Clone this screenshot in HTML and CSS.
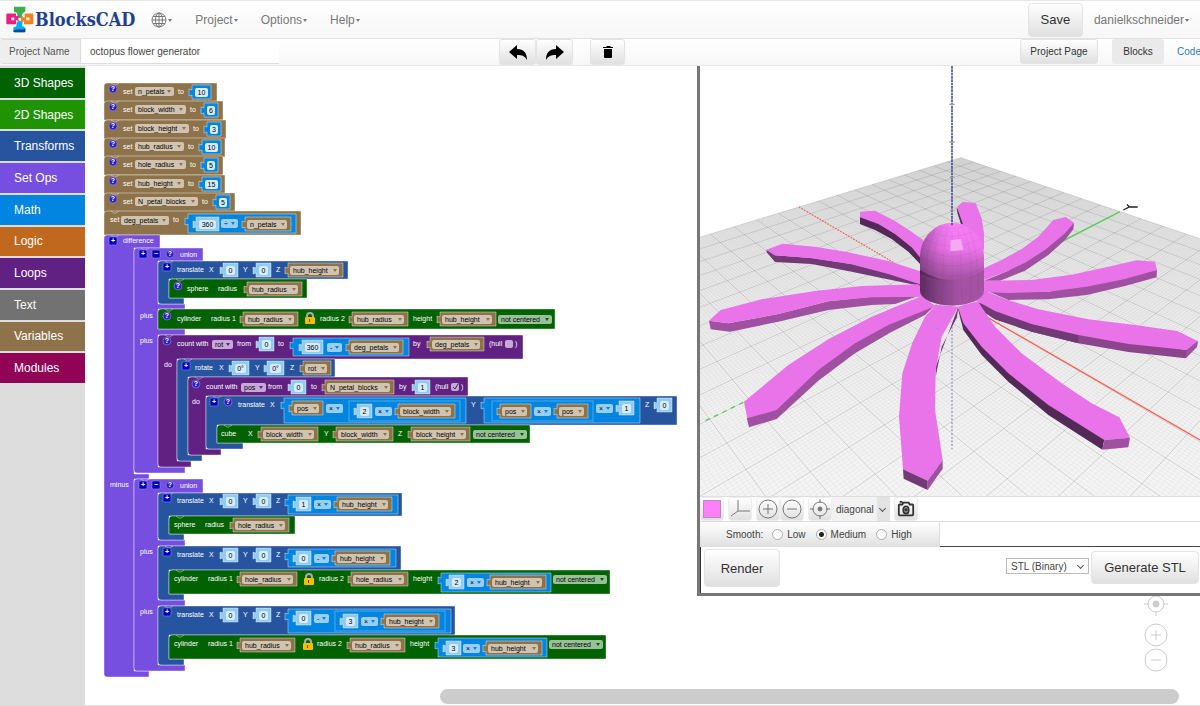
FILE: index.html
```html
<!DOCTYPE html>
<html lang="en">
<head>
<meta charset="utf-8">
<title>BlocksCAD</title>
<link rel="stylesheet" href="styles.css">
</head>
<body>
<header class="topbar">
  <a class="brand" href="#">
    <svg class="brand-mark" viewBox="0 0 84 80" aria-hidden="true">
      <path fill="#3fae49" d="M24 2h34v14l-8 5-3 8 5 5-11 5-9-6 4-4-4-9-8-3z"/>
      <path fill="#ee1c7a" d="M4 22h26v9l6-4 6 8-4 10-8-4v13H4q-3 0-3-3V25q0-3 3-3z"/>
      <path fill="#f58220" d="M56 22h23q3 0 3 3v26q0 3-3 3H54v-9l-8 3-3-10 5-7 8 4z"/>
      <path fill="#00aeef" d="M32 48l9-5 9 5-2 11 10 6v10q0 3-3 3H24q-2 0-2-3V64l9-4z"/>
      <path fill="#1f3f93" d="M22 74l8-4h20l8-2v7q0 3-3 3H25q-3 0-3-4z"/>
      <path fill="#fff" d="M16 34h9v8h-9zM61 34h9v8h-9zM37 35h8v7h-8z"/>
    </svg>
    <span>BlocksCAD</span>
  </a>
  <nav class="menu">
    <button class="menu-item" aria-label="Language">
      <svg class="globe" viewBox="0 0 16 16" aria-hidden="true"><circle cx="8" cy="8" r="7"/><ellipse cx="8" cy="8" rx="3.500" ry="7"/><path d="M8 1v14M1 8h14M2 4.500h12M2 11.500h12"/></svg><i class="caret"></i>
    </button>
    <button class="menu-item">Project<i class="caret"></i></button>
    <button class="menu-item">Options<i class="caret"></i></button>
    <button class="menu-item">Help<i class="caret"></i></button>
  </nav>
  <button class="btn btn-save">Save</button>
  <button class="menu-item account">danielkschneider<i class="caret"></i></button>
</header>

<div class="toolbar">
  <label class="name-label" for="project-name">Project Name</label>
  <input class="name-input" id="project-name" type="text" value="octopus flower generator">
  <div class="history">
    <button class="btn tool" aria-label="Undo"><svg viewBox="0 0 20 18"><path d="M1 9 9 2v4c7 0 10 4 10 11-2-4-5-5-10-5v4z"/></svg></button>
    <button class="btn tool" aria-label="Redo"><svg viewBox="0 0 20 18"><path d="M19 9 11 2v4C4 6 1 10 1 17c2-4 5-5 10-5v4z"/></svg></button>
  </div>
  <button class="btn tool trash" aria-label="Delete"><svg viewBox="0 0 20 18"><path d="M5 4h3l1-1h3l1 1h2v1H5zM6 6h8v8q0 1-1 1H7q-1 0-1-1z"/></svg></button>
  <div class="views">
    <button class="btn page">Project Page</button>
    <button class="tab active">Blocks</button>
    <a class="tab code" href="#">Code</a>
  </div>
</div>

<main class="main">
  <div class="sidebar">
    <nav class="toolbox">
      <button class="cat c-3d">3D Shapes</button>
      <button class="cat c-2d">2D Shapes</button>
      <button class="cat c-transform">Transforms</button>
      <button class="cat c-set">Set Ops</button>
      <button class="cat c-math">Math</button>
      <button class="cat c-logic">Logic</button>
      <button class="cat c-loop">Loops</button>
      <button class="cat c-text">Text</button>
      <button class="cat c-var">Variables</button>
      <button class="cat c-module">Modules</button>
    </nav>
  </div>

  <section class="workspace">
    <svg class="blocks" aria-label="Block program"><g id="blocks" transform="translate(-85 -66)"></g></svg>

    <div class="zoom-controls">
      <button aria-label="Center"><svg viewBox="0 0 24 24"><circle cx="12" cy="12" r="8"/><circle class="dot" cx="12" cy="12" r="3"/><path d="M0 12h4M20 12h4M12 0v4M12 20v4"/></svg></button>
      <button aria-label="Zoom in"><svg viewBox="0 0 24 24"><circle cx="12" cy="12" r="11"/><path d="M7 12h10M12 7v10"/></svg></button>
      <button aria-label="Zoom out"><svg viewBox="0 0 24 24"><circle cx="12" cy="12" r="11"/><path d="M7 12h10"/></svg></button>
    </div>
    <div class="scroll"></div>

    <aside class="viewer">
      <svg class="scene" viewBox="15 18 1500 1293" preserveAspectRatio="xMinYMin slice" aria-label="Rendered model">
        <defs>
          <linearGradient id="floor" x1="0" y1="0" x2="0" y2="1"><stop offset="0" stop-color="#e6e6e6"/><stop offset=".35" stop-color="#f4f4f4"/><stop offset="1" stop-color="#fff"/></linearGradient>
          <linearGradient id="dome" x1="0" y1="0" x2="0" y2="1"><stop offset="0" stop-color="#f97ff8"/><stop offset=".45" stop-color="#ee74ec"/><stop offset=".75" stop-color="#c160c0"/><stop offset="1" stop-color="#a452a3"/></linearGradient>
          <linearGradient id="shade" x1="0" y1="0" x2="1" y2="0"><stop offset="0" stop-color="#3a1a3e" stop-opacity=".45"/><stop offset=".3" stop-color="#3a1a3e" stop-opacity=".1"/><stop offset=".5" stop-color="#3a1a3e" stop-opacity="0"/></linearGradient>
          <linearGradient id="tube" x1="0" y1="0" x2="1" y2="0"><stop offset="0" stop-color="#5b2c5f"/><stop offset=".3" stop-color="#854286"/><stop offset=".6" stop-color="#a452a3"/><stop offset="1" stop-color="#a452a3"/></linearGradient>
        </defs>
        <g id="grid"></g>
        <path class="ax-x dotted" d="M312 441 600 610"/>
        <path class="ax-x" d="M865 765 1515 1140"/>
        <path class="ax-y" d="M1275 455 1100 545"/>
        <path class="ax-y dashed" d="M145 1027 30 1083"/>
        <path class="ax-z low" d="M771 800V1168"/>
        <path class="glyph" d="M1285 450 1303 441H1328M1303 441 1296 433"/>
        <path class="top" d="M787 440 803 425 842 430 860 475 867 520V570L800 505z"/>
        <path class="dark" d="M785 440 804 493 798 492 787 458z"/>
        <path class="dark" d="M495 468 550 490 600 520 650 560 690 600V628L640 575 590 537 540 510 495 492z"/>
        <path class="top" d="M495 455 540 452 600 483 650 515 690 545V610L650 562 600 522 550 492 495 472z"/>
        <path class="mid" d="M214 569 240 586 350 594 470 612 580 640 680 672V679L560 654 470 635 350 612 240 606 216 578z"/>
        <path class="top" d="M214 569 262 551 360 560 460 577 580 603 690 638V677L660 668 580 642 470 613 350 595 240 586z"/>
        <path class="low-side" d="M1137 488 1135 508 1110 540 1060 585 990 632 915 662 867 662 940 632z"/>
        <path class="top" d="M1075 480 1112 471 1137 488 1110 520 1050 570 990 608 940 632 860 662V628L920 600 980 567 1030 530z"/>
        <path class="low-side" d="M870 690 1060 695 1386 630 1385 652 1290 678 1175 705 1060 718 940 720z"/>
        <path class="top" d="M860 663 1010 660 1130 644 1250 618 1325 601 1380 605 1386 630 1290 657 1175 680 1060 695 940 699 860 696z"/>
        <path class="plum" d="M850 727 1010 792 1475 870 1508 843 1506 860 1472 895 1300 876 1150 850 1010 815 900 778 870 758z"/>
        <path class="mid" d="M850 727 1010 792 1150 825V850L1010 815 900 778 870 758z"/>
        <path class="top" d="M870 693 940 720 1030 748 1180 778 1320 795 1447 813 1508 843 1475 870 1300 852 1150 825 1010 792 900 753 840 720z"/>
        <path class="low-side" d="M1475 870 1508 843 1506 860 1472 895z"/>
        <path class="low-side" d="M42 782 100 790 250 762 400 724 530 710 670 708 600 732 530 735 400 750 250 785 105 815 47 808z"/>
        <path class="top" d="M42 782 77 750 200 718 360 693 500 678 670 673 700 710 530 712 400 724 250 762 100 790z"/>
        <path class="low-side" d="M720 735 690 765 585 818 480 880 370 962 245 1077 162 1102 155 1073 243 1048 368 928 478 848 578 793z"/>
        <path class="top" d="M147 1025 280 915 400 838 530 770 680 708 722 738 580 795 480 850 370 930 245 1050 157 1075z"/>
        <path class="mid" d="M790 740 786 772 740 860 722 950V920z"/>
        <path class="top" d="M690 770 722 734 790 740 740 830 722 930 720 1050 743 1200 698 1262 624 1228 612 1070 622 940 652 848z"/>
        <path class="mid" d="M624 1228 698 1262V1290L626 1256z"/>
        <path class="low-side" d="M698 1262 743 1200V1226L698 1290z"/>
        <path class="dark" d="M788 743 805 810 860 885 940 965 1060 1065 1222 1169 1228 1138 1060 1030 860 850z"/>
        <path class="top" d="M788 740 848 724 900 800 980 880 1100 970 1190 1030 1273 1072 1305 1133 1228 1140 1060 1035 940 940 860 860 805 790z"/>
        <path class="low-side" d="M1228 1140 1305 1133 1300 1162 1222 1169z"/>
        <path fill="url(#tube)" d="M675 600V692A96 45 0 0 0 867 692V600z"/>
        <path fill="url(#dome)" d="M675 630V590A96 102 0 0 1 867 590V630Q771 690 675 630z"/>
        <path fill="url(#shade)" d="M675 640V590A96 102 0 0 1 867 590V640Q771 690 675 640z"/>
        <path class="facet" d="M730 498Q771 514 812 498M706 515Q771 545 836 515M690 538Q771 580 852 538M679 563Q771 615 863 563M675 592Q771 645 867 592M675 622Q771 675 867 622M771 510V735M740 505Q714 560 714 630V722M802 505Q828 560 828 630V722M722 505Q690 560 690 700M820 505Q850 560 850 700M756 508Q742 570 742 730M788 508Q800 570 800 730"/>
        <path class="shine" d="M767 541 798 537 805 570 766 574z"/>
        <path class="ax-z" d="M771 18V497"/>
        <path class="ticks" d="M763 133h16M763 246h16M765 352h12M766 451h10"/>
      </svg>
      <div class="view-tools">
        <button class="btn vt color" aria-label="Model colour"><span></span></button>
        <button class="btn vt" aria-label="Toggle axes"><svg viewBox="0 0 20 20"><path d="M8 1v11h12M8 12 1 17"/></svg></button>
        <div class="pair">
          <button class="btn vt" aria-label="Zoom in"><svg viewBox="0 0 20 20"><circle cx="10" cy="10" r="9"/><path d="M5 10h10M10 5v10"/></svg></button>
          <button class="btn vt" aria-label="Zoom out"><svg viewBox="0 0 20 20"><circle cx="10" cy="10" r="9"/><path d="M5 10h10"/></svg></button>
        </div>
        <div class="pair">
          <button class="btn vt" aria-label="Reset view"><svg viewBox="0 0 20 20"><circle cx="10" cy="10" r="7"/><circle class="dot" cx="10" cy="10" r="2"/><path d="M0 10h4M16 10h4M10 0v4M10 16v4"/></svg></button>
          <span class="select angle"><select aria-label="View angle"><option>diagonal</option></select></span>
        </div>
        <button class="btn vt camera" aria-label="Take picture"><svg viewBox="0 0 20 20"><path d="M3 5h3l1-2h6l1 2h3q1 0 1 1v10q0 1-1 1H3q-1 0-1-1V6q0-1 1-1zM3 2h3"/><ellipse cx="10" cy="11" rx="3" ry="4"/><circle class="dot" cx="10" cy="11" r="1"/></svg></button>
      </div>
      <div class="quality">
        <fieldset class="smooth">
          <span>Smooth:</span>
          <label><input type="radio" name="smooth">Low</label>
          <label><input type="radio" name="smooth" checked>Medium</label>
          <label><input type="radio" name="smooth">High</label>
        </fieldset>
      </div>
      <div class="render-row">
        <button class="btn big render">Render</button>
        <span class="select format"><select aria-label="File format"><option>STL (Binary)</option></select></span>
        <button class="btn big generate">Generate STL</button>
      </div>
    </aside>
  </section>
</main>
<script src="app.js"></script>
</body>
</html>
```

FILE: styles.css
```css
* { box-sizing: border-box; }

body {
  margin: 0;
  height: 100vh;
  display: flex;
  flex-direction: column;
  overflow: hidden;
  background: #fff;
  color: #333;
  font: 10px "Liberation Sans", Arial, sans-serif;
}

button, input, select { font: inherit; color: inherit; }
button { padding: 0; border: 0; background: none; white-space: nowrap; }
svg { display: block; }

.btn {
  border: 1px solid #e3e3e3;
  border-radius: 3px;
  background: linear-gradient(#fff, #e0e0e0);
  color: #333;
}

.caret {
  display: inline-block;
  margin: 2px 0 0 1px;
  vertical-align: middle;
  border: 2px solid transparent;
  border-top: 3px solid #777;
  border-bottom: 0;
}

/* Top bar */
.topbar {
  flex: none;
  display: flex;
  align-items: center;
  height: 39px;
  padding: 0 11px 0 6px;
  border-top: 1px solid #e7e7e7;
  border-bottom: 1px solid #e2e2e2;
  background: linear-gradient(#fff, #f7f7f7);
}
.brand {
  display: flex;
  align-items: center;
  gap: 1px;
  color: #223f8f;
  text-decoration: none;
  font: bold 18px "DejaVu Serif Condensed", "DejaVu Serif", serif;
}
.brand-mark { width: 28px; height: 27px; }
.menu { display: flex; flex: 1; gap: 23px; margin-left: 16px; }
.menu-item { display: flex; align-items: center; color: #777; font-size: 12px; }
.globe { width: 16px; height: 16px; fill: none; stroke: #777; stroke-width: 1; }
.btn-save { width: 55px; height: 34px; margin-right: 11px; font-size: 13px; border-radius: 4px; }

/* Project bar */
.toolbar {
  flex: none;
  display: flex;
  position: relative;
  height: 27px;
  border-bottom: 1px solid #e7e7e7;
  background: linear-gradient(#fff, #f7f7f7);
}
.name-label {
  width: 81px;
  height: 25px;
  padding-left: 9px;
  border: 1px solid #ddd;
  border-left: 0;
  border-radius: 3px 0 0 3px;
  background: #eee;
  color: #555;
  line-height: 24px;
}
.name-input {
  width: 198px;
  height: 25px;
  padding: 0 9px;
  border: 0;
  border-bottom: 1px solid #ddd;
  background: #fff;
  color: #444;
}
.history { display: flex; margin-left: 220px; }
.tool { width: 37px; height: 26px; display: grid; place-items: center; }
.tool svg { width: 20px; height: 18px; fill: #000; }
.trash { width: 35px; margin-left: 17px; }
.views { display: flex; margin-left: auto; margin-right: -7px; }
.page { width: 78px; height: 25px; margin-right: 14px; }
.tab { width: 52px; height: 25px; line-height: 25px; text-align: center; border-radius: 3px; }
.tab.active { background: #eaeaea; }
.tab.code { width: 42px; padding-left: 6px; margin-left: 1px; color: #337ab7; text-decoration: none; }

/* Categories */
.main { flex: 1; display: flex; min-height: 0; }
.sidebar { flex: none; width: 85px; padding-top: 2px; background: #ddd; }
.toolbox {
  height: 315px;
  display: grid;
  grid-auto-rows: 1fr;
  row-gap: 2px;
}
.cat { padding-left: 14px; text-align: left; color: #fff; font-size: 12px; }
.c-3d { background: #006200; }
.c-2d { background: #209303; }
.c-transform { background: #26549e; }
.c-set { background: #774fe0; }
.c-math { background: #0185e1; }
.c-logic { background: #c0681e; }
.c-loop { background: #612182; }
.c-text { background: #727272; }
.c-var { background: #8e734a; }
.c-module { background: #900355; }

/* Block workspace */
.workspace { flex: 1; position: relative; min-width: 0; overflow: hidden; border-bottom: 1px solid #ddd; }
.blocks { width: 100%; height: 100%; }
.blocks text { font-size: 7px; fill: #fff; }
.block { stroke: #fff; stroke-opacity: .4; stroke-width: 1; }
.notch { fill: none; stroke: #fff; stroke-opacity: .4; }
.inset { fill: none; stroke: #fff; stroke-opacity: .3; }
.k-3d { fill: #006200; }
.k-transform { fill: #26549e; }
.k-set { fill: #774fe0; }
.k-math { fill: #0185e1; }
.k-loop { fill: #612182; }
.k-var { fill: #8e734a; }
.k-num { fill: #91cbf4; }
.box { fill: #0000b8; stroke: #8d8de8; stroke-opacity: .6; }
.help { fill: #2a20c0; }
.blocks .sign { font-weight: bold; text-anchor: middle; }
.field {
  display: block;
  width: 100%;
  height: 100%;
  margin: 0;
  padding: 0 3px;
  border: 0;
  border-radius: 2px;
  appearance: none;
  font-size: 7px;
  line-height: 9px;
  color: #000;
}
.f-var { background: #d0c3b0; }
.f-num { background: #d6ecfb; padding: 0; text-align: center; }
.f-blue { background: #99cef3; }
.f-loop { background: #c6a9d6; }
.f-green { background: #99c099; }
.f-check { padding: 0; background: #c6a9d6; }
.arrow { fill: #8e734a; pointer-events: none; }
.a-blue { fill: #0185e1; }
.a-loop { fill: #612182; }
.a-green { fill: #006200; }
.tick { fill: none; stroke: #333; }
.shackle { fill: none; stroke: #aaa; stroke-width: 2; }
.lock { fill: #f7bd00; }
.keyhole { fill: #6b4a00; }

.zoom-controls {
  position: absolute;
  right: 32px;
  bottom: 33px;
  display: grid;
  gap: 1px;
}
.zoom-controls svg { width: 24px; height: 24px; fill: none; stroke: #ccc; stroke-width: 1; }
.zoom-controls button:first-child { margin-bottom: 6px; }
.zoom-controls .dot { fill: #ccc; }
.scroll {
  position: absolute;
  left: 355px;
  right: 21px;
  bottom: 1px;
  height: 15px;
  border-radius: 8px;
  background: #ccc;
}

/* Model viewer */
.viewer {
  position: absolute;
  top: 0;
  right: 0;
  left: 612px;
  display: flex;
  flex-direction: column;
  border-left: 3px solid #777;
  border-bottom: 3px solid #777;
  background: #fff;
}
.scene { width: 100%; height: 430px; }
.grid-minor { stroke: #000; stroke-opacity: .12; stroke-width: 1; fill: none; }
.grid-major { stroke: #000; stroke-opacity: .14; stroke-width: 3; fill: none; }
.ax-x { stroke: #ff5b50; stroke-width: 4; }
.ax-x.dotted { stroke-dasharray: 4 5; }
.ax-y { stroke: #55cf50; stroke-width: 4; }
.ax-y.dashed { stroke-dasharray: 14 14; }
.ax-z { stroke: #50509c; stroke-width: 5; stroke-dasharray: 8 2; }
.ax-z.low { stroke: #a9a9c6; stroke-dasharray: 6 5; }
.ticks { stroke: #999; stroke-width: 4; }
.glyph { fill: none; stroke: #222; stroke-width: 4; }
.top { fill: #e973e8; }
.low-side { fill: #a050a0; }
.plum { fill: #8b468b; }
.mid { fill: #723a75; }
.dark { fill: #532a57; }
.facet { fill: none; stroke: #4a1a50; stroke-opacity: .1; stroke-width: 2; }
.shine { fill: #f4a9f3; }

.view-tools {
  display: flex;
  gap: 4px;
  height: 26px;
  border-top: 1px solid #ddd;
  border-bottom: 1px solid #ddd;
}
.pair { display: flex; }
.vt { width: 24px; height: 24px; display: grid; place-items: center; border-color: #eee; }
.vt svg { width: 20px; height: 20px; fill: none; stroke: #777; stroke-width: 1; }
.vt .dot { fill: #777; }
.camera svg { stroke: #333; stroke-width: 2; width: 18px; height: 18px; }
.camera .dot { fill: #333; }
.color span { width: 18px; height: 18px; border: 1px solid #b58cb5; background: #ff80ff; }
.select { position: relative; display: inline-flex; }
.select select { appearance: none; border: 0; background: none; padding: 0 4px; width: 100%; color: #444; }
.select::after {
  content: "";
  position: absolute;
  right: 5px;
  top: 50%;
  width: 4px;
  height: 4px;
  margin-top: -3px;
  border: solid #555;
  border-width: 0 1px 1px 0;
  transform: rotate(45deg);
  pointer-events: none;
}
.angle { width: 58px; background: linear-gradient(90deg, #f2f2f2 45px, #e3e3e3 45px); }
.quality { height: 25px; border-bottom: 1px solid #444; }
.smooth {
  display: flex;
  align-items: center;
  width: 240px;
  height: 25px;
  margin: 0;
  padding: 0 0 0 26px;
  border: 0;
  border-right: 1px solid #ddd;
  background: linear-gradient(#fff, #e0e0e0);
  color: #444;
}
.smooth span { margin-right: 9px; }
.smooth label { display: flex; align-items: center; gap: 4px; margin-right: 10px; }
.smooth input {
  appearance: none;
  width: 11px;
  height: 11px;
  margin: 0;
  border: 1px solid #aaa;
  border-radius: 50%;
  background: #fff;
}
.smooth input:checked { background: radial-gradient(#222 0 2px, #fff 3px); }
.render-row { display: flex; align-items: flex-start; height: 46px; padding: 2px 1px 0 3px; border-left: 1px solid #333; }
.big { font-size: 13px; border-radius: 4px; }
.render { width: 76px; height: 38px; margin-right: auto; }
.format { width: 83px; height: 16px; margin: 9px 2px 0 0; border: 1px solid #bbb; }
.generate { width: 108px; height: 33px; margin-top: 2px; }
```

FILE: app.js
```js
const NS = "http://www.w3.org/2000/svg";
const root = document.getElementById("blocks");

function add(parent, tag, attrs, text) {
  const el = document.createElementNS(NS, tag);
  for (const k in attrs) el.setAttribute(k, attrs[k]);
  if (text) el.textContent = text;
  parent.appendChild(el);
  return el;
}

/* ---- block primitives; y is always the vertical centre of a row ---- */

function notch(x, y) {
  add(root, "path", { class: "notch", d: `M${x + 7} ${y}l3 2h2l3-2` });
}

function stmt(kind, x, y, right, bottom) {
  add(root, "path", {
    class: "block k-" + kind,
    d: `M${x} ${bottom}V${y + 3}q0-3 3-3H${right}V${bottom}z`
  });
  notch(x, y);
}

/* A bracket block: header, then one arm after each mouth. mouths: [top, bottom, lipBottom] */
function cblock(kind, x, y, right, inner, lip, mouths) {
  let d = `M${x + 3} ${y}H${right}`;
  for (const [top, bottom, end] of mouths) d += `V${top}H${inner}V${bottom}H${lip}V${end}`;
  d += `H${x + 3}q-3 0-3-3V${y + 3}q0-3 3-3z`;
  add(root, "path", { class: "block k-" + kind, d });
  notch(x, y);
}

function label(x, y, text) {
  add(root, "text", { x, y: y + 2 }, text);
}

function control(tag, cls, x, y, w, h, value) {
  const fo = add(root, "foreignObject", { x, y, width: w, height: h });
  const el = document.createElement(tag);
  el.className = "field " + cls;
  el.setAttribute("aria-label", value);
  if (tag === "select") el.add(new Option(value));
  else el.value = value;
  fo.appendChild(el);
  return el;
}

function arrow(x, y, cls) {
  add(root, "path", { class: "arrow " + cls, d: `M${x} ${y - 1}h4l-2 3z` });
}

function socket(kind, x, y, right, bottom) {
  add(root, "path", { class: "block k-" + kind, d: `M${x} ${y}H${right}V${bottom}H${x}V${y + 10}l-3 1V${y + 4}l3 1z` });
}

function variable(x, right, y, name) {
  socket("var", x, y - 7, right, y + 7);
  control("select", "f-var", x + 2, y - 4, right - x - 6, 9, name);
  arrow(right - 10, y, "");
}

function number(x, right, y, value, kind = "num") {
  socket(kind, x, y - 7, right, y + 7);
  control("input", "f-num", x + 3, y - 4, right - x - 6, 9, value);
}

function drop(x, right, y, value, tone) {
  control("select", "f-" + tone, x, y - 4, right - x, 9, value);
  arrow(right - 7, y, "a-" + tone);
}

function math(x, y, right, bottom) { socket("math", x, y, right, bottom); }

function inset(x, y, right, bottom) {
  add(root, "rect", { class: "inset", x, y, width: right - x, height: bottom - y });
}

function icon(x, y, sign) {
  if (sign === "?") add(root, "circle", { class: "box help", cx: x, cy: y, r: 4 });
  else add(root, "rect", { class: "box", x: x - 4, y: y - 4, width: 8, height: 8, rx: 1 });
  add(root, "text", { class: "sign", x, y: y + 2 }, sign);
}

function check(x, y, on) {
  const el = control("input", "f-check", x, y - 4, 8, 8, "hull");
  el.type = "checkbox";
  el.checked = on;
  if (on) add(root, "path", { class: "tick", d: `M${x + 2} ${y}l2 2 3-5` });
}

function lock(x, y) {
  add(root, "path", { class: "shackle", d: `M${x - 3} ${y}v-2a3 3 0 0 1 6 0v2` });
  add(root, "rect", { class: "lock", x: x - 5, y: y - 1, width: 10, height: 7, rx: 1 });
  add(root, "rect", { class: "keyhole", x: x - 1, y: y + 1, width: 1, height: 3 });
}

/* ---- variable assignments ---- */

[
  ["n_petals", "10", 83, 217, 174],
  ["block_width", "6", 101, 223, 186],
  ["block_height", "3", 120, 226, 189],
  ["hub_radius", "10", 138, 225, 184],
  ["hole_radius", "5", 156, 223, 186],
  ["hub_height", "15", 175, 225, 184],
  ["N_petal_blocks", "5", 193, 235, 198]
].forEach(([name, value, y, right, fieldRight]) => {
  stmt("var", 104, y, right, y + 19);
  icon(113, y + 6, "?");
  label(123, y + 9, "set");
  control("select", "f-var", 135, y + 4, fieldRight - 135, 9, name);
  arrow(fieldRight - 7, y + 8, "");
  label(fieldRight + 4, y + 9, "to");
  const x = fieldRight + 18;
  number(x, x + (value.length > 1 ? 19 : 14), y + 9, value, "math");
});

stmt("var", 104, 211, 301, 235);
label(110, 220, "set");
control("select", "f-var", 121, 216, 48, 9, "deg_petals");
arrow(162, 220, "");
label(173, 220, "to");
math(188, 214, 296, 233);
number(196, 219, 224, "360");
drop(221, 238, 223, "÷", "blue");
variable(245, 291, 224, "n_petals");

/* ---- set operations ---- */

cblock("set", 104, 235, 160, 134, 149, [[248, 474, 479], [479, 671, 677]]);
icon(113, 241, "+");
label(123, 241, "difference");
label(110, 485, "minus");

cblock("set", 134, 248, 203, 158, 185, [[261, 304, 309], [309, 329, 335], [335, 467, 473]]);
cblock("set", 134, 479, 203, 158, 185, [[493, 540, 546], [546, 600, 606], [606, 665, 671]]);
[254, 485].forEach(y => {
  icon(143, y, "+");
  icon(156, y, "−");
  icon(170, y, "?");
  label(180, y + 1, "union");
});
[316, 341, 552, 612].forEach(y => label(140, y, "plus"));

function translateHead(y) {
  icon(167, y - 3, "+");
  label(177, y, "translate");
  label(209, y, "X");
  number(223, 238, y, "0");
  label(243, y, "Y");
  number(256, 271, y, "0");
  label(276, y, "Z");
}

/* ---- outer shape ---- */

cblock("transform", 158, 261, 348, 169, 184, [[279, 298, 304]]);
translateHead(270);
variable(288, 343, 270, "hub_height");
stmt("3d", 169, 279, 307, 298);
icon(178, 286, "?");
label(187, 289, "sphere");
label(218, 289, "radius");
variable(247, 302, 289, "hub_radius");

stmt("3d", 158, 309, 555, 329);
icon(167, 316, "?");
label(177, 319, "cylinder");
label(211, 319, "radius 1");
variable(243, 298, 319, "hub_radius");
lock(310, 318);
label(320, 319, "radius 2");
variable(352, 408, 319, "hub_radius");
label(413, 319, "height");
variable(440, 496, 319, "hub_height");
drop(498, 552, 319, "not centered", "green");

/* ---- petal loops ---- */

cblock("loop", 158, 335, 523, 177, 191, [[359, 461, 467]]);
icon(167, 341, "?");
label(177, 344, "count with");
drop(212, 233, 344, "rot", "loop");
label(237, 344, "from");
number(259, 274, 344, "0");
label(278, 344, "to");
math(293, 338, 409, 356);
number(302, 323, 347, "360");
drop(327, 342, 347, "-", "blue");
variable(349, 403, 347, "deg_petals");
label(413, 344, "by");
variable(430, 484, 344, "deg_petals");
label(489, 344, "(hull");
check(505, 344, false);
label(515, 344, ")");
label(164, 365, "do");

cblock("transform", 177, 359, 335, 188, 202, [[377, 455, 461]]);
icon(186, 366, "+");
label(195, 368, "rotate");
label(219, 368, "X");
number(232, 249, 368, "0°");
label(255, 368, "Y");
number(267, 284, 368, "0°");
label(290, 368, "Z");
variable(303, 331, 368, "rot");

cblock("loop", 188, 377, 468, 206, 221, [[396, 449, 455]]);
icon(196, 384, "?");
label(206, 387, "count with");
drop(241, 266, 387, "pos", "loop");
label(268, 387, "from");
number(291, 306, 387, "0");
label(311, 387, "to");
variable(325, 394, 387, "N_petal_blocks");
label(399, 387, "by");
number(415, 430, 387, "1");
label(435, 387, "(hull");
check(451, 387, true);
label(461, 387, ")");
label(192, 402, "do");

cblock("transform", 206, 396, 677, 217, 243, [[425, 443, 449]]);
icon(214, 402, "+");
icon(228, 402, "?");
label(238, 405, "translate");
label(270, 405, "X");
math(284, 398, 466, 423);
variable(292, 323, 408, "pos");
drop(326, 343, 408, "×", "blue");
inset(349, 401, 460, 421);
number(357, 372, 411, "2");
drop(375, 392, 411, "×", "blue");
variable(398, 455, 411, "block_width");
label(471, 405, "Y");
math(484, 398, 640, 423);
inset(492, 401, 593, 421);
variable(500, 531, 411, "pos");
drop(534, 551, 411, "×", "blue");
variable(557, 588, 411, "pos");
drop(596, 613, 408, "×", "blue");
number(619, 634, 408, "1");
label(645, 405, "Z");
number(657, 672, 405, "0");

stmt("3d", 217, 425, 530, 443);
label(221, 434, "cube");
label(248, 434, "X");
variable(261, 318, 434, "block_width");
label(324, 434, "Y");
variable(336, 393, 434, "block_width");
label(398, 434, "Z");
variable(411, 470, 434, "block_height");
drop(473, 527, 434, "not centered", "green");

/* ---- subtracted shapes ---- */

cblock("transform", 158, 493, 402, 169, 184, [[516, 534, 540]]);
translateHead(501);
math(288, 495, 398, 514);
number(296, 311, 504, "1");
drop(314, 331, 504, "×", "blue");
variable(337, 392, 504, "hub_height");
stmt("3d", 169, 516, 295, 534);
label(174, 525, "sphere");
label(205, 525, "radius");
variable(233, 289, 525, "hole_radius");

cblock("transform", 158, 546, 401, 169, 184, [[570, 594, 600]]);
translateHead(555);
math(288, 549, 396, 567);
number(296, 311, 558, "0");
drop(314, 329, 558, "-", "blue");
variable(335, 390, 558, "hub_height");
stmt("3d", 169, 570, 610, 594);
label(174, 579, "cylinder");
label(208, 579, "radius 1");
variable(240, 297, 579, "hole_radius");
lock(309, 579);
label(319, 579, "radius 2");
variable(351, 408, 579, "hole_radius");
label(413, 579, "height");
math(441, 573, 551, 592);
number(449, 464, 582, "2");
drop(467, 484, 582, "×", "blue");
variable(490, 546, 582, "hub_height");
drop(553, 607, 579, "not centered", "green");

cblock("transform", 158, 606, 455, 169, 184, [[635, 659, 665]]);
translateHead(615);
math(288, 609, 451, 633);
number(296, 311, 618, "0");
drop(314, 329, 618, "-", "blue");
inset(335, 611, 445, 631);
number(343, 358, 621, "3");
drop(361, 378, 621, "×", "blue");
variable(384, 439, 621, "hub_height");
stmt("3d", 169, 635, 606, 659);
label(174, 644, "cylinder");
label(208, 644, "radius 1");
variable(240, 295, 645, "hub_radius");
lock(308, 644);
label(317, 644, "radius 2");
variable(350, 405, 645, "hub_radius");
label(410, 644, "height");
math(438, 638, 547, 657);
number(446, 461, 648, "3");
drop(463, 480, 648, "×", "blue");
variable(486, 542, 648, "hub_height");
drop(549, 603, 644, "not centered", "green");

/* ---- floor grid, projected from plane coordinates in -1..1 ---- */

const grid = document.getElementById("grid");

function project(u, v) {
  const w = 1 + 0.3632 * u + 0.3287 * v;
  return ((771 - 345.7 * u + 923.1 * v) / w).toFixed(1) + " " +
         ((710 - 108.8 * u - 105.4 * v) / w).toFixed(1);
}

add(grid, "path", {
  fill: "url(#floor)",
  d: `M${project(1, 1)}L${project(1, -1)}L${project(-1, -1)}L${project(-1, 1)}z`
});
let minor = "", major = "";
for (let i = -100; i <= 100; i++) {
  const t = i / 100;
  const seg = `M${project(t, -1)}L${project(t, 1)}M${project(-1, t)}L${project(1, t)}`;
  if (i % 10) minor += seg; else major += seg;
}
add(grid, "path", { class: "grid-minor", d: minor });
add(grid, "path", { class: "grid-major", d: major });
```
